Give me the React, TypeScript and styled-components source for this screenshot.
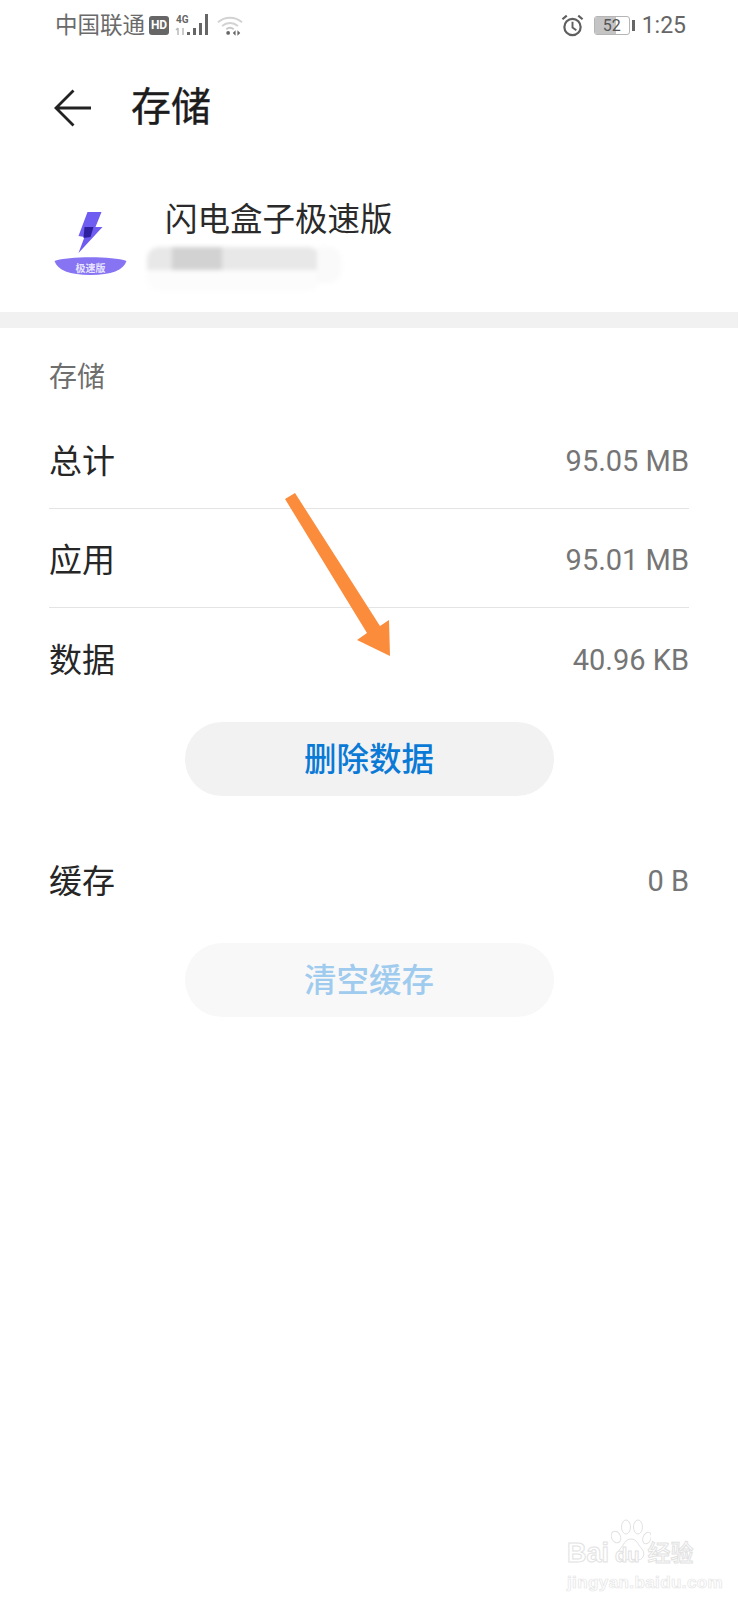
import styled, { createGlobalStyle } from "styled-components";

const GlobalStyle = createGlobalStyle`
  html, body {
    margin: 0;
    padding: 0;
    background: #fff;
  }
  body {
    font-family: "Roboto", "Noto Sans CJK SC", sans-serif;
  }
`;

const App = () => {
  return (
    <>
      <GlobalStyle />
      <Page>
        <StatusBar>
          <StatusLeft>
            <Carrier>中国联通</Carrier>
            <HdBadge>HD</HdBadge>
            <SignalIcon />
            <WifiIcon />
          </StatusLeft>
          <StatusRight>
            <AlarmIcon />
            <Battery>
              <BatteryFill />
              <BatteryText>52</BatteryText>
            </Battery>
            <BatteryCap />
            <Clock>1:25</Clock>
          </StatusRight>
        </StatusBar>

        <Header>
          <BackIcon />
          <PageTitle>存储</PageTitle>
        </Header>

        <AppRow>
          <LogoIcon />
          <AppInfo>
            <AppName>闪电盒子极速版</AppName>
            <BlurredVersion>
              <BlurDark />
              <BlurLight />
            </BlurredVersion>
          </AppInfo>
        </AppRow>

        <Band />

        <Content>
          <SectionLabel>存储</SectionLabel>
          <Row $divided>
            <RowLabel>总计</RowLabel>
            <RowValue>95.05 MB</RowValue>
          </Row>
          <Row $divided>
            <RowLabel>应用</RowLabel>
            <RowValue>95.01 MB</RowValue>
          </Row>
          <Row>
            <RowLabel>数据</RowLabel>
            <RowValue>40.96 KB</RowValue>
          </Row>
          <PillButton>删除数据</PillButton>
          <Row $spaced>
            <RowLabel>缓存</RowLabel>
            <RowValue>0 B</RowValue>
          </Row>
          <PillButton $disabled>清空缓存</PillButton>
        </Content>

        <ArrowOverlay />
        <Watermark>
          <PawIcon />
          <WatermarkBrand>
            <span>Bai</span>
            <WatermarkDu>du</WatermarkDu>
            <WatermarkCn>经验</WatermarkCn>
          </WatermarkBrand>
          <WatermarkUrl>jingyan.baidu.com</WatermarkUrl>
        </Watermark>
      </Page>
    </>
  );
};

export default App;

const SignalIcon = () => (
  <SignalSvg viewBox="0 0 36 24">
    <text x="1" y="10" fontSize="10" fontWeight="700" fontFamily="Roboto" fill="#666">
      4G
    </text>
    <path d="M3 15v7M1 17l2-2M8 15v7" stroke="#bbb" strokeWidth="1.5" fill="none" />
    <rect x="12" y="19" width="3" height="3" fill="#666" />
    <rect x="18" y="15" width="3" height="7" fill="#666" />
    <rect x="24" y="10" width="3" height="12" fill="#666" />
    <rect x="30" y="1" width="3" height="21" fill="#666" />
  </SignalSvg>
);

const WifiIcon = () => (
  <WifiSvg viewBox="0 0 28 22">
    <path d="M1 7.500C8.500 1 19.500 1 27 7.500" stroke="#d2d2d2" strokeWidth="2" fill="none" />
    <path d="M5.500 11.500c5-4.300 12-4.300 17 0" stroke="#d2d2d2" strokeWidth="2" fill="none" />
    <path d="M10 15c2.500-2 5.500-2 8 0" stroke="#c8c8c8" strokeWidth="2" fill="none" />
    <circle cx="12" cy="19" r="2" fill="#666" />
    <path d="M20 16v6l-3-3zM22 16v6l3-3z" fill="#666" />
  </WifiSvg>
);

const AlarmIcon = () => (
  <AlarmSvg viewBox="0 0 24 24">
    <circle cx="12" cy="13.500" r="8.500" stroke="#5f5f5f" strokeWidth="2.300" fill="none" />
    <path d="M12 8v6l4 3" stroke="#5f5f5f" strokeWidth="2" fill="none" />
    <path d="M1.500 5.500 6 1.800M22.500 5.500 18 1.800" stroke="#5f5f5f" strokeWidth="2.300" fill="none" />
  </AlarmSvg>
);

const BackIcon = () => (
  <BackSvg viewBox="0 0 38 38">
    <path d="M37 19H2M19.500 1.500 2 19l17.500 17.500" stroke="#222" strokeWidth="2.800" fill="none" />
  </BackSvg>
);

const LogoIcon = () => (
  <LogoSvg viewBox="0 0 72 68">
    <path d="M33 2h14l-6 15h7L24 43l6-16-6-1z" fill="#6f5cf0" />
    <path d="M30 17h9l-3 10-7 1z" fill="#2d1f9e" />
    <path d="M0 51c14-5 58-5 72 0-3 9-15 14-36 14S3 60 0 51z" fill="#8674f3" />
    <text x="36" y="62" textAnchor="middle" fontSize="10" fontWeight="700" fill="#e8e4ff" fontFamily="Noto Sans CJK SC">
      极速版
    </text>
  </LogoSvg>
);

const PawIcon = () => (
  <PawSvg viewBox="0 0 40 44">
    <g fill="#fff" stroke="#e2e2e2" strokeWidth="1">
      <ellipse cx="5" cy="18" rx="4.500" ry="6" transform="rotate(-25 5 18)" />
      <ellipse cx="15" cy="8" rx="4.500" ry="7" />
      <ellipse cx="27" cy="8" rx="4.500" ry="7" />
      <ellipse cx="36" cy="19" rx="4" ry="6" transform="rotate(20 36 19)" />
      <path d="M20 20c-6 0-7 6-11 10-4 5-1 12 6 11 3-1 7-1 10 0 7 1 10-6 6-11-4-4-5-10-11-10z" />
    </g>
  </PawSvg>
);

const ArrowOverlay = () => (
  <ArrowSvg viewBox="0 0 110 170">
    <path d="M0 6 10 0 95 133 104 127 105 163 72 147 82 140z" fill="#fb8c3c" />
  </ArrowSvg>
);

const Page = styled.div`
  position: relative;
  width: 738px;
  height: 1600px;
  overflow: hidden;
  background: #fff;
`;

const StatusBar = styled.div`
  height: 50px;
  padding: 0 52px 0 55px;
  display: flex;
  align-items: center;
  justify-content: space-between;
  color: #666;
`;

const StatusLeft = styled.div`
  display: flex;
  align-items: center;
`;

const StatusRight = styled.div`
  display: flex;
  align-items: center;
`;

const Carrier = styled.span`
  font-size: 22.500px;
  line-height: 26px;
  color: #6a6a6a;
`;

const HdBadge = styled.span`
  width: 20px;
  height: 19px;
  margin-left: 4px;
  border-radius: 3px;
  background: #666;
  color: #fff;
  font-size: 12px;
  font-weight: 700;
  line-height: 19px;
  text-align: center;
`;

const SignalSvg = styled.svg`
  width: 36px;
  height: 24px;
  margin-left: 6px;
`;

const WifiSvg = styled.svg`
  width: 26px;
  height: 21px;
  margin-left: 6px;
`;

const AlarmSvg = styled.svg`
  width: 23px;
  height: 23px;
`;

const Battery = styled.div`
  position: relative;
  width: 34px;
  height: 17px;
  margin-left: 10px;
  border: 1.5px solid #b5b5b5;
  border-radius: 3px;
  overflow: hidden;
`;

const BatteryFill = styled.div`
  width: 64%;
  height: 100%;
  background: #c4c4c4;
`;

const BatteryText = styled.span`
  position: absolute;
  inset: 0;
  font-size: 16px;
  line-height: 17px;
  text-align: center;
  color: #555;
`;

const BatteryCap = styled.div`
  width: 3px;
  height: 11px;
  margin-left: 2px;
  background: #666;
`;

const Clock = styled.span`
  margin-left: 7px;
  font-size: 23px;
  color: #666;
`;

const Header = styled.div`
  height: 116px;
  padding-left: 54px;
  display: flex;
  align-items: center;
`;

const BackSvg = styled.svg`
  width: 38px;
  height: 38px;
`;

const PageTitle = styled.h1`
  margin: 0 0 0 39px;
  font-size: 40px;
  font-weight: 400;
  line-height: 48px;
  color: #1c1c1c;
  -webkit-text-stroke: 0.4px #1c1c1c;
`;

const AppRow = styled.div`
  height: 146px;
  padding: 0 0 0 54px;
  box-sizing: border-box;
  display: flex;
  align-items: flex-start;
`;

const LogoSvg = styled.svg`
  width: 73px;
  height: 68px;
  margin-top: 44px;
`;

const AppInfo = styled.div`
  margin: 33px 0 0 38px;
  display: flex;
  flex-direction: column;
`;

const AppName = styled.div`
  font-size: 32.500px;
  line-height: 42px;
  color: #2a2a2a;
`;

const BlurredVersion = styled.div`
  position: relative;
  width: 173px;
  height: 44px;
  margin: 6px 0 0 -18px;
  background: linear-gradient(#e8e8e8 0 52%, #fcfcfc 52% 100%);
  border-radius: 12px;
  filter: blur(2px);
`;

const BlurDark = styled.div`
  position: absolute;
  left: 25px;
  top: 0;
  width: 50px;
  height: 23px;
  background: #d2d2d2;
`;

const BlurLight = styled.div`
  position: absolute;
  left: 170px;
  top: 0;
  width: 24px;
  height: 36px;
  background: #fafafa;
  border-radius: 0 12px 12px 0;
`;

const Band = styled.div`
  height: 16px;
  background: #f1f1f1;
`;

const Content = styled.div`
  padding: 0 49px;
`;

const SectionLabel = styled.div`
  height: 82px;
  padding-top: 32px;
  box-sizing: border-box;
  font-size: 28px;
  line-height: 36px;
  color: #6e6e6e;
`;

const Row = styled.div<{ $divided?: boolean; $spaced?: boolean }>`
  height: 99px;
  margin-top: ${(props) => (props.$spaced ? "33px" : "0")};
  display: flex;
  align-items: center;
  justify-content: space-between;
  border-bottom: ${(props) => (props.$divided ? "1px solid #e4e4e4" : "none")};
  box-sizing: border-box;
`;

const RowLabel = styled.span`
  font-size: 33px;
  color: #262626;
`;

const RowValue = styled.span`
  padding-top: 4px;
  font-size: 29px;
  color: #757575;
`;

const PillButton = styled.div<{ $disabled?: boolean }>`
  width: 369px;
  height: 74px;
  margin: 15px auto 0;
  padding-top: 2px;
  box-sizing: border-box;
  border-radius: 37px;
  background: ${(props) => (props.$disabled ? "#f8f8f8" : "#f2f2f2")};
  color: ${(props) => (props.$disabled ? "#9fcbee" : "#0a7ad6")};
  font-size: 32.500px;
  font-weight: 500;
  line-height: 72px;
  text-align: center;
`;

const ArrowSvg = styled.svg`
  position: absolute;
  left: 285px;
  top: 493px;
  width: 110px;
  height: 170px;
`;

const Watermark = styled.div`
  position: absolute;
  left: 567px;
  top: 1518px;
  width: 165px;
`;

const PawSvg = styled.svg`
  position: absolute;
  left: 44px;
  top: 1px;
  width: 40px;
  height: 44px;
`;

const WatermarkBrand = styled.div`
  position: relative;
  padding-top: 19px;
  display: flex;
  align-items: center;
  font-family: "Liberation Sans", "Noto Sans CJK SC", sans-serif;
  font-size: 27px;
  font-weight: 700;
  line-height: 28px;
  color: #fff;
  -webkit-text-stroke: 1px #e2e2e2;
`;

const WatermarkDu = styled.span`
  margin: 4px 8px 0 6px;
  font-size: 20px;
`;

const WatermarkCn = styled.span`
  font-size: 23px;
  font-weight: 500;
`;

const WatermarkUrl = styled.div`
  margin-top: 3px;
  font-family: "Liberation Sans", sans-serif;
  font-size: 17px;
  font-weight: 700;
  line-height: 22px;
  letter-spacing: 0.4px;
  color: #fff;
  -webkit-text-stroke: 0.7px #e6e6e6;
`;
